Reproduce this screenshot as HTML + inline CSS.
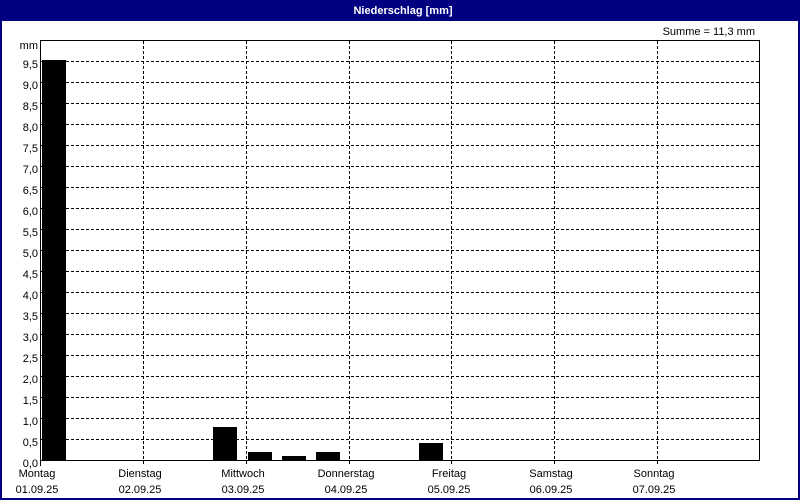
<!DOCTYPE html>
<html><head><meta charset="utf-8"><style>
html,body{margin:0;padding:0;background:#fff}
svg{display:block}
text{font-family:"Liberation Sans",sans-serif;font-size:11px;fill:#000}
</style></head><body>
<svg width="800" height="500" xmlns="http://www.w3.org/2000/svg" shape-rendering="crispEdges">
<rect x="0" y="0" width="800" height="500" fill="#000080"/>
<rect x="2" y="21" width="796" height="477" fill="#fff"/>
<text x="403" y="14" text-anchor="middle" style="fill:#fff;font-weight:bold;font-size:11px">Niederschlag [mm]</text>
<text x="755" y="35" text-anchor="end">Summe = 11,3 mm</text>
<g stroke="#000" stroke-width="1" stroke-dasharray="3,2" fill="none">
<line x1="41" y1="40.5" x2="760" y2="40.5"/>
<line x1="41" y1="61.5" x2="760" y2="61.5"/><line x1="41" y1="82.5" x2="760" y2="82.5"/>
<line x1="41" y1="103.5" x2="760" y2="103.5"/><line x1="41" y1="124.5" x2="760" y2="124.5"/>
<line x1="41" y1="145.5" x2="760" y2="145.5"/><line x1="41" y1="166.5" x2="760" y2="166.5"/>
<line x1="41" y1="187.5" x2="760" y2="187.5"/><line x1="41" y1="208.5" x2="760" y2="208.5"/>
<line x1="41" y1="229.5" x2="760" y2="229.5"/><line x1="41" y1="250.5" x2="760" y2="250.5"/>
<line x1="41" y1="271.5" x2="760" y2="271.5"/><line x1="41" y1="292.5" x2="760" y2="292.5"/>
<line x1="41" y1="313.5" x2="760" y2="313.5"/><line x1="41" y1="334.5" x2="760" y2="334.5"/>
<line x1="41" y1="355.5" x2="760" y2="355.5"/><line x1="41" y1="376.5" x2="760" y2="376.5"/>
<line x1="41" y1="397.5" x2="760" y2="397.5"/><line x1="41" y1="418.5" x2="760" y2="418.5"/>
<line x1="41" y1="439.5" x2="760" y2="439.5"/>
<line x1="143.5" y1="41" x2="143.5" y2="466"/><line x1="246.5" y1="41" x2="246.5" y2="466"/>
<line x1="349.5" y1="41" x2="349.5" y2="466"/><line x1="451.5" y1="41" x2="451.5" y2="466"/>
<line x1="554.5" y1="41" x2="554.5" y2="466"/><line x1="657.5" y1="41" x2="657.5" y2="466"/>
</g>
<g stroke="#000" fill="none">
<rect x="40.5" y="40.5" width="719" height="420"/>
<line x1="40.5" y1="460" x2="40.5" y2="466"/>
</g>
<g fill="#000">
<rect x="42" y="60" width="24" height="400"/>
<rect x="213" y="427" width="24" height="33"/>
<rect x="248" y="452" width="24" height="8"/>
<rect x="282" y="456" width="24" height="4"/>
<rect x="316" y="452" width="24" height="8"/>
<rect x="419" y="443" width="24" height="17"/>
</g>
<g text-anchor="end">
<text x="38" y="49">mm</text>
<text x="38" y="68">9,5</text><text x="38" y="89">9,0</text><text x="38" y="110">8,5</text>
<text x="38" y="131">8,0</text><text x="38" y="152">7,5</text><text x="38" y="173">7,0</text>
<text x="38" y="194">6,5</text><text x="38" y="215">6,0</text><text x="38" y="236">5,5</text>
<text x="38" y="257">5,0</text><text x="38" y="278">4,5</text><text x="38" y="299">4,0</text>
<text x="38" y="320">3,5</text><text x="38" y="341">3,0</text><text x="38" y="362">2,5</text>
<text x="38" y="383">2,0</text><text x="38" y="404">1,5</text><text x="38" y="425">1,0</text>
<text x="38" y="446">0,5</text><text x="38" y="467">0,0</text>
</g>
<g text-anchor="middle">
<text x="37" y="477">Montag</text><text x="37" y="493">01.09.25</text>
<text x="140" y="477">Dienstag</text><text x="140" y="493">02.09.25</text>
<text x="243" y="477">Mittwoch</text><text x="243" y="493">03.09.25</text>
<text x="346" y="477">Donnerstag</text><text x="346" y="493">04.09.25</text>
<text x="449" y="477">Freitag</text><text x="449" y="493">05.09.25</text>
<text x="551" y="477">Samstag</text><text x="551" y="493">06.09.25</text>
<text x="654" y="477">Sonntag</text><text x="654" y="493">07.09.25</text>
</g>
</svg>
</body></html>
